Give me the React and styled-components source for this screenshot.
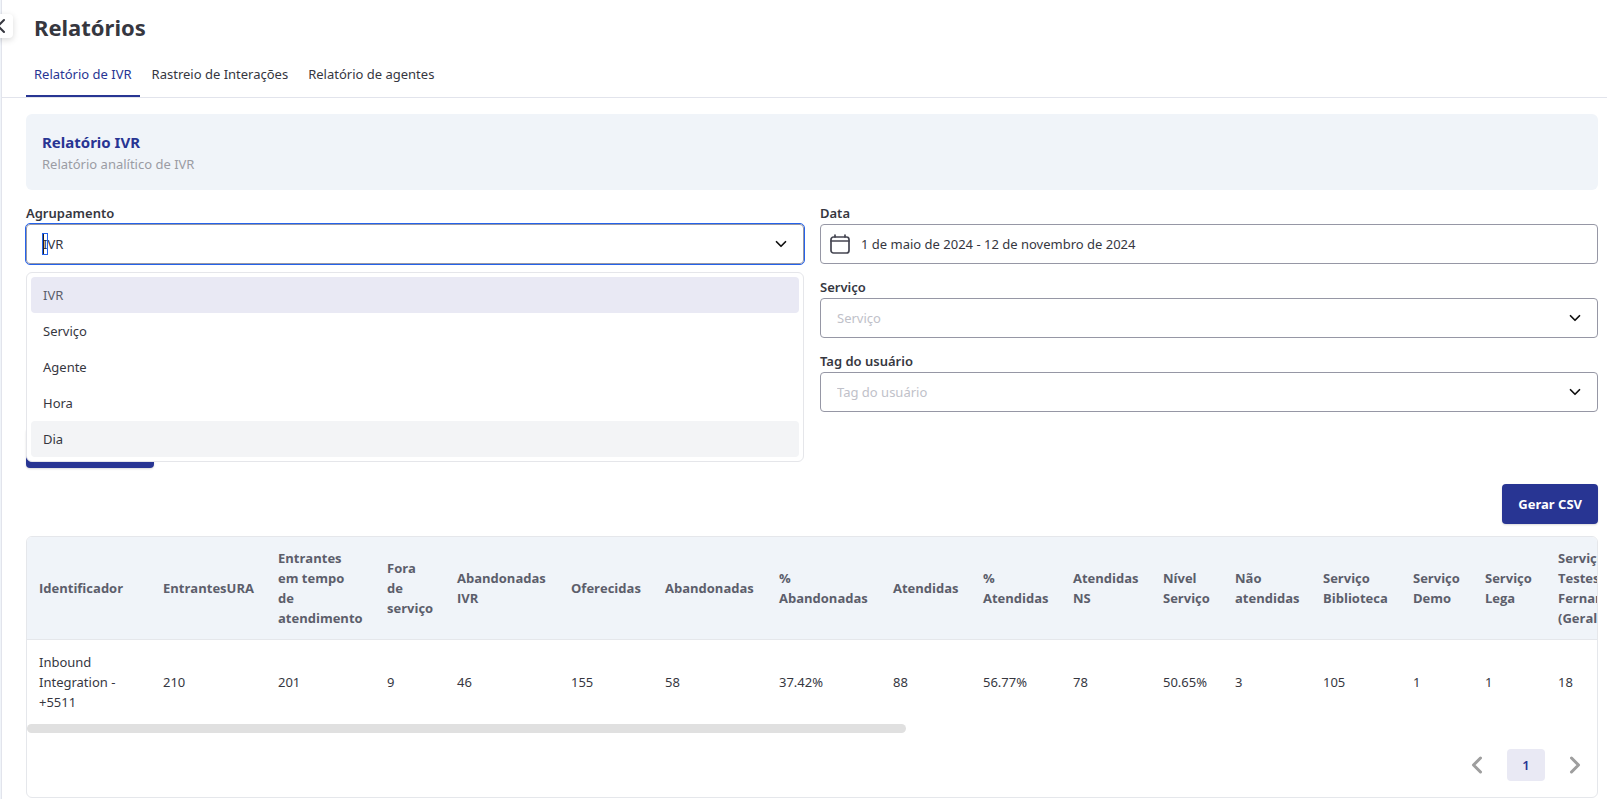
import styled, { createGlobalStyle } from "styled-components";
import { ChevronDown, ChevronLeft, ChevronRight } from "lucide-react";

const GlobalStyle = createGlobalStyle`
  * {
    box-sizing: border-box;
  }

  body {
    margin: 0;
    background: #fff;
    color: #36373f;
    font-family: "Noto Sans", "Open Sans", sans-serif;
    font-size: 13px;
    line-height: 20px;
  }

  button,
  input,
  select {
    font: inherit;
    color: inherit;
  }
`;

const Shell = styled.div`
  padding-left: 1px;
  background: #f0f4f9;
`;

const Page = styled.main`
  position: relative;
  min-height: 100vh;
  border-left: 1px solid #e2e4ec;
  background: #fff;
`;

const CollapseButton = styled.button`
  position: absolute;
  top: 14px;
  left: -13px;
  display: flex;
  align-items: center;
  justify-content: center;
  width: 24px;
  height: 24px;
  padding: 0;
  border: 0;
  border-radius: 4px;
  background: #fff;
  box-shadow: 0 2px 6px rgba(0, 0, 0, 0.15);
`;

const Title = styled.h1`
  margin: 0;
  padding: 11px 32px 0;
  font-size: 22px;
  font-weight: 700;
  line-height: 32px;
`;

const Tabs = styled.nav`
  display: flex;
  gap: 4px;
  margin-top: 13px;
  padding: 0 24px;
  border-bottom: 1px solid #e2e4ec;
`;

const Tab = styled.a`
  padding: 8px 8px 11px;
  border-bottom: 2px solid ${(p) => (p.$active ? "#283593" : "transparent")};
  color: ${(p) => (p.$active ? "#283593" : "inherit")};
  text-decoration: none;
`;

const Content = styled.div`
  padding: 16px 9px 0 24px;
`;

const Banner = styled.section`
  padding: 16px;
  border-radius: 6px;
  background: #f0f4f9;
`;

const BannerTitle = styled.h2`
  margin: 0;
  color: #283593;
  font-size: 15px;
  font-weight: 700;
  line-height: 24px;
`;

const BannerText = styled.p`
  margin: 0;
  color: #9b9ca4;
`;

const Filters = styled.form`
  display: grid;
  grid-template-columns: 1fr 1fr;
  column-gap: 16px;
  margin-top: 13px;
`;

const Column = styled.div`
  display: flex;
  flex-direction: column;
  gap: 13px;
`;

const Label = styled.label`
  display: block;
  margin-bottom: 1px;
  font-weight: 600;
`;

const Control = styled.div`
  position: relative;
  display: flex;
  align-items: center;
  height: 40px;
  border: 1px solid #9697a5;
  border-radius: 4px;
  outline: ${(p) => (p.$focused ? "1px solid #2563eb" : "none")};
`;

const Arrow = styled(ChevronDown)`
  position: absolute;
  right: 13px;
  color: #111;
  pointer-events: none;
`;

const Value = styled.span`
  padding-left: 16px;
`;

const SearchInput = styled.input`
  position: absolute;
  left: 15px;
  width: 6px;
  height: 22px;
  padding: 0;
  border: 1px solid #2563eb;
  background: transparent;
  box-shadow: inset 1px 0 #222;
  outline: none;
  caret-color: transparent;
`;

const Select = styled.select`
  width: 100%;
  height: 100%;
  padding: 0 16px;
  border: 0;
  background: transparent;
  color: #c0c1c9;
  appearance: none;
`;

const DateInput = styled.input`
  flex: 1;
  padding: 0 11px;
  border: 0;
  background: transparent;
`;

const CalendarSvg = styled.svg`
  margin-left: 9px;
`;

const Menu = styled.ul`
  position: absolute;
  top: 47px;
  left: -1px;
  right: -1px;
  z-index: 1;
  margin: 0;
  padding: 4px;
  border: 1px solid #e5e6ea;
  border-radius: 6px;
  background: #fff;
  list-style: none;
`;

const Option = styled.li`
  padding: 8px 12px;
  border-radius: 4px;
  background: ${(p) => p.$background || "transparent"};
  color: ${(p) => (p.$selected ? "#5c5e6b" : "inherit")};
`;

const Button = styled.button`
  height: 40px;
  padding: 0 16px;
  border: 0;
  border-radius: 4px;
  background: #283593;
  box-shadow: 0 1px 2px rgba(0, 0, 0, 0.15);
  color: #fff;
  font-weight: 700;
`;

const SearchButton = styled(Button)`
  justify-self: start;
  width: 128px;
  margin-top: 16px;
`;

const Actions = styled.div`
  display: flex;
  justify-content: flex-end;
  margin: 16px 0 12px;
`;

const Card = styled.section`
  border: 1px solid #e5e7eb;
  border-radius: 6px;
  overflow: hidden;
`;

const Scroller = styled.div`
  overflow-x: auto;
  scrollbar-width: none;
`;

const ScrollThumb = styled.div`
  width: 56%;
  height: 9px;
  border-radius: 5px;
  background: #e0e0e0;
`;

const Table = styled.table`
  width: 2807px;
  table-layout: fixed;
  border-collapse: separate;
  border-spacing: 0;
  text-align: left;
`;

const HeadCell = styled.th`
  width: ${(p) => (p.$width ? `${p.$width}px` : "auto")};
  height: 103px;
  padding: 11px 12px;
  border-bottom: 1px solid #e5e7eb;
  background: #f0f4f9;
  color: #5c5e6b;
  font-family: "Open Sans", "Noto Sans", sans-serif;
  font-weight: 700;
`;

const Cell = styled.td`
  padding: 12px;
`;

const Pagination = styled.nav`
  display: flex;
  align-items: center;
  justify-content: flex-end;
  gap: 16px;
  padding: 16px 8px;
`;

const PageButton = styled.button`
  display: flex;
  align-items: center;
  justify-content: center;
  min-width: ${(p) => (p.$current ? "38px" : "28px")};
  height: 32px;
  padding: 0;
  border: 0;
  border-radius: 4px;
  background: ${(p) => (p.$current ? "#e9e9f4" : "transparent")};
  color: ${(p) => (p.$current ? "#283593" : "#9e9e9e")};
  font-weight: 600;
`;

const tabs = [
  "Relatório de IVR",
  "Rastreio de Interações",
  "Relatório de agentes",
];

const groupings = ["IVR", "Serviço", "Agente", "Hora", "Dia"];

const columns = [
  { title: "Identificador", value: "Inbound Integration - +5511", width: 124 },
  { title: "EntrantesURA", value: "210", width: 115 },
  { title: "Entrantes em tempo de atendimento", value: "201", width: 109 },
  { title: "Fora de serviço", value: "9", width: 70 },
  { title: "Abandonadas IVR", value: "46", width: 114 },
  { title: "Oferecidas", value: "155", width: 94 },
  { title: "Abandonadas", value: "58", width: 114 },
  { title: "% Abandonadas", value: "37.42%", width: 114 },
  { title: "Atendidas", value: "88", width: 90 },
  { title: "% Atendidas", value: "56.77%", width: 90 },
  { title: "Atendidas NS", value: "78", width: 90 },
  { title: "Nível Serviço", value: "50.65%", width: 72 },
  { title: "Não atendidas", value: "3", width: 88 },
  { title: "Serviço Biblioteca", value: "105", width: 90 },
  { title: "Serviço Demo", value: "1", width: 72 },
  { title: "Serviço Lega", value: "1", width: 73 },
  { title: "Serviço Testes Fernando (Geral)", value: "18", width: 90 },
];

function CalendarIcon() {
  return (
    <CalendarSvg
      width="20"
      height="20"
      viewBox="0 0 20 20"
      fill="none"
      stroke="#454652"
      strokeWidth="1.7"
      strokeLinecap="round"
    >
      <rect x="1" y="3" width="18" height="16" rx="2.5" />
      <path d="M1 7h18M5 1v2M15 1v2" />
    </CalendarSvg>
  );
}

function SelectField({ id, label }) {
  return (
    <div>
      <Label htmlFor={id}>{label}</Label>
      <Control>
        <Select id={id} defaultValue="">
          <option value="">{label}</option>
        </Select>
        <Arrow size={18} strokeWidth={2.3} />
      </Control>
    </div>
  );
}

function GroupingField() {
  return (
    <div>
      <Label htmlFor="grouping">Agrupamento</Label>
      <Control $focused>
        <Value>IVR</Value>
        <SearchInput
          id="grouping"
          role="combobox"
          aria-expanded="true"
          aria-controls="grouping-options"
        />
        <Arrow size={18} strokeWidth={2.3} />
        <Menu id="grouping-options" role="listbox">
          {groupings.map((name) => (
            <Option
              key={name}
              role="option"
              aria-selected={name === "IVR"}
              $selected={name === "IVR"}
              $background={{ IVR: "#e9e9f4", Dia: "#f3f4f6" }[name]}
            >
              {name}
            </Option>
          ))}
        </Menu>
      </Control>
    </div>
  );
}

function ReportTable() {
  return (
    <Card>
      <Scroller>
        <Table>
          <thead>
            <tr>
              {columns.map(({ title, width }) => (
                <HeadCell key={title} $width={width}>
                  {title}
                </HeadCell>
              ))}
              <HeadCell />
            </tr>
          </thead>
          <tbody>
            <tr>
              {columns.map(({ title, value }) => (
                <Cell key={title}>{value}</Cell>
              ))}
              <Cell />
            </tr>
          </tbody>
        </Table>
      </Scroller>
      <ScrollThumb />
      <Pagination aria-label="Paginação">
        <PageButton aria-label="Anterior">
          <ChevronLeft size={28} strokeWidth={2.6} />
        </PageButton>
        <PageButton $current>1</PageButton>
        <PageButton aria-label="Próxima">
          <ChevronRight size={28} strokeWidth={2.6} />
        </PageButton>
      </Pagination>
    </Card>
  );
}

function App() {
  return (
    <Shell>
      <GlobalStyle />
      <Page>
        <CollapseButton aria-label="Recolher menu">
          <ChevronLeft size={24} />
        </CollapseButton>
        <Title>Relatórios</Title>
        <Tabs>
          {tabs.map((name, i) => (
            <Tab key={name} href="#" $active={i === 0}>
              {name}
            </Tab>
          ))}
        </Tabs>
        <Content>
          <Banner>
            <BannerTitle>Relatório IVR</BannerTitle>
            <BannerText>Relatório analítico de IVR</BannerText>
          </Banner>
          <Filters onSubmit={(e) => e.preventDefault()}>
            <Column>
              <GroupingField />
            </Column>
            <Column>
              <div>
                <Label htmlFor="date">Data</Label>
                <Control>
                  <CalendarIcon />
                  <DateInput
                    id="date"
                    readOnly
                    value="1 de maio de 2024 - 12 de novembro de 2024"
                  />
                </Control>
              </div>
              <SelectField id="service" label="Serviço" />
              <SelectField id="tag" label="Tag do usuário" />
            </Column>
            <SearchButton aria-label="Pesquisar" />
          </Filters>
          <Actions>
            <Button>Gerar CSV</Button>
          </Actions>
          <ReportTable />
        </Content>
      </Page>
    </Shell>
  );
}

export default App;
